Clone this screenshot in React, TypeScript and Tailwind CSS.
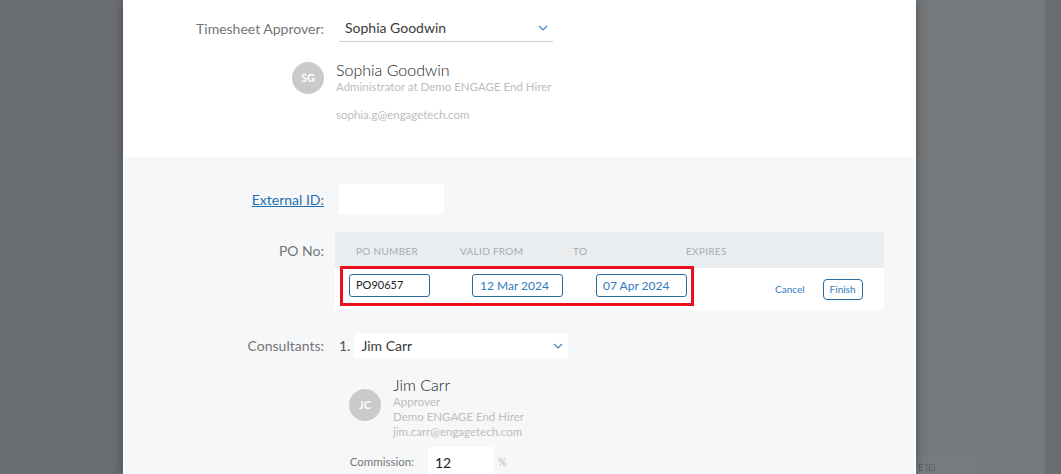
import React from "react";

const font = { fontFamily: "Lato, 'Open Sans', sans-serif" };

function Chevron() {
  return (
    <svg width="10" height="6" viewBox="0 0 10 6" className="shrink-0">
      <polyline points="1,1 5,5 9,1" fill="none" stroke="#3b82c4" strokeWidth="1.2" />
    </svg>
  );
}

function Avatar({ initials }: { initials: string }) {
  return (
    <div className="w-[32px] h-[32px] rounded-full bg-[#c9cacc] flex items-center justify-center text-white text-[11px] font-bold shrink-0">
      {initials}
    </div>
  );
}

export default function App() {
  return (
    <div className="w-[1061px] h-[474px] overflow-hidden flex bg-[#6b6e71] text-[#333]" style={font}>
      <div className="w-[123px] shrink-0" />
      <div className="w-[793px] shrink-0 flex flex-col bg-white relative z-10 shadow-[0_0_10px_rgba(0,0,0,0.35)]">
        {/* white section */}
        <div className="h-[157px] shrink-0 flex flex-col pt-[14px]">
          <div className="flex items-center">
            <div className="w-[201px] text-right text-[14px] text-[#757575]">Timesheet Approver:</div>
            <div className="ml-[15px] w-[214px] h-[28px] border-b border-[#cfcfcf] flex items-center justify-between pl-[6px] pr-[5px]">
              <span className="text-[14px] text-[#3a3a3a]">Sophia Goodwin</span>
              <Chevron />
            </div>
          </div>
          <div className="flex mt-[18px] pl-[169px]">
            <div className="mt-[2px]"><Avatar initials="SG" /></div>
            <div className="ml-[12px] flex flex-col">
              <div className="text-[16px] leading-[20px] text-[#222] font-light">Sophia Goodwin</div>
              <div className="text-[11.5px] leading-[14px] text-[#bdbdbd]">Administrator at Demo ENGAGE End Hirer</div>
              <div className="text-[11.5px] leading-[14px] text-[#bdbdbd] mt-[14px]">sophia.g@engagetech.com</div>
            </div>
          </div>
        </div>
        {/* gray section */}
        <div className="flex-1 bg-[#f6f7f9] mx-[2px] flex flex-col pt-[27px]">
          <div className="flex items-center">
            <div className="w-[199px] text-right text-[14px] text-[#1f6fb0] underline">External ID:</div>
            <div className="ml-[15px] w-[105px] h-[30px] bg-white" />
          </div>
          <div className="flex mt-[18px]">
            <div className="w-[199px] text-right text-[14px] text-[#757575] pt-[8px]">PO No:</div>
            <div className="ml-[11px] w-[549px] flex flex-col relative">
              <div className="h-[36px] bg-[#eaedf0] flex items-center text-[10px] text-[#a9acae] tracking-[0.3px] pt-[3px]">
                <span className="ml-[21px] w-[104px]">PO NUMBER</span>
                <span className="w-[113px]">VALID FROM</span>
                <span className="w-[113px]">TO</span>
                <span>EXPIRES</span>
              </div>
              <div className="h-[42px] bg-white flex items-center">
                <div className="self-start mt-[6px] ml-[14px] w-[81px] h-[23px] border border-[#2b6aa0] rounded-[3px] flex items-center pl-[6px] text-[11px] text-[#222]">PO90657</div>
                <div className="self-start mt-[6px] ml-[42px] w-[91px] h-[23px] border border-[#2b6aa0] rounded-[3px] flex items-center pl-[7px] text-[12px] text-[#2f7bbb]">12 Mar 2024</div>
                <div className="self-start mt-[6px] ml-[33px] w-[91px] h-[23px] border border-[#2b6aa0] rounded-[3px] flex items-center pl-[6px] text-[12px] text-[#2f7bbb]">07 Apr 2024</div>
                <span className="ml-[88px] text-[10px] text-[#2f7bbb]">Cancel</span>
                <div className="ml-[18px] w-[40px] h-[21px] border border-[#2b6aa0] rounded-[4px] flex items-center justify-center text-[10px] text-[#2f7bbb]">Finish</div>
              </div>
              <div className="absolute left-[5px] top-[34px] w-[354px] h-[40px] border-[3px] border-[#e8111c]" />
            </div>
          </div>
          <div className="flex items-center mt-[23px]">
            <div className="w-[199px] text-right text-[14px] text-[#757575]">Consultants:</div>
            <div className="ml-[15px] text-[14px] text-[#555]">1.</div>
            <div className="ml-[4px] w-[214px] h-[25px] bg-white flex items-center justify-between pl-[7px] pr-[5px]">
              <span className="text-[14px] text-[#3a3a3a]">Jim Carr</span>
              <Chevron />
            </div>
          </div>
          <div className="flex mt-[17px] pl-[224px]">
            <div className="mt-[14px]"><Avatar initials="JC" /></div>
            <div className="ml-[12px] flex flex-col">
              <div className="text-[16px] leading-[20px] text-[#222] font-light">Jim Carr</div>
              <div className="text-[11.5px] leading-[14px] text-[#bdbdbd]">Approver</div>
              <div className="text-[11.5px] leading-[15px] text-[#bdbdbd]">Demo ENGAGE End Hirer</div>
              <div className="text-[11.5px] leading-[15px] text-[#bdbdbd]">jim.carr@engagetech.com</div>
            </div>
          </div>
          <div className="flex items-center mt-[8px]">
            <div className="w-[289px] text-right text-[11.5px] text-[#777]">Commission:</div>
            <div className="ml-[14px] w-[66px] h-[30px] bg-white flex items-center pl-[7px] text-[14px] text-[#222]">12</div>
            <span className="ml-[4px] text-[11px] text-[#bdbdbd]">%</span>
          </div>
        </div>
      </div>
      <div className="flex-1 flex">
        <div className="w-[129px] bg-[#76797b] flex flex-col justify-end">
          <div className="w-[60px] h-[17px] bg-[#7a7d7f] text-[9px] text-[#55585b] pl-[2px] pt-[4px]">E (£)</div>
        </div>
        <div className="flex-1" />
      </div>
    </div>
  );
}
